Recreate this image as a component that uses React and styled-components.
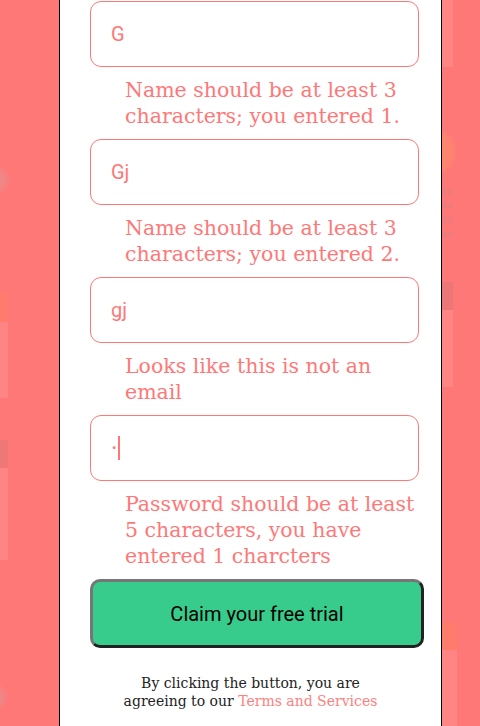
import React from "react";
import styled, { createGlobalStyle } from "styled-components";

const Global = createGlobalStyle`
  html, body {
    margin: 0;
    padding: 0;
    height: 726px;
    overflow: hidden;
    background: #ff7878;
  }
  * { box-sizing: border-box; }
`;

const Page = styled.div`
  position: relative;
  width: 480px;
  height: 726px;
  background: #ff7878;
  display: flex;
  justify-content: flex-start;
  padding-left: 59px;
  overflow: hidden;
`;

const Decor = styled.div`
  position: absolute;
  left: ${(p) => p.$x}px;
  top: ${(p) => p.$y}px;
  width: ${(p) => p.$w}px;
  height: ${(p) => p.$h}px;
  background: ${(p) => p.$c};
  border-radius: ${(p) => (p.$round ? "50%" : "0")};
  filter: ${(p) => (p.$round ? "blur(2px)" : "none")};
`;

const Panel = styled.main`
  position: relative;
  z-index: 1;
  width: 383px;
  height: 726px;
  background: #ffffff;
  border-left: 1px solid #000;
  border-right: 1px solid #000;
  padding: 1px 0 0 30px;
  display: flex;
  flex-direction: column;
  align-items: flex-start;
`;

const Form = styled.form`
  display: flex;
  flex-direction: column;
  align-items: flex-start;
  margin: 0;
`;

const Field = styled.div`
  width: 329px;
  height: 66px;
  border: 1px solid #ff7878;
  border-radius: 11px;
  padding: 0 20px;
  display: flex;
  align-items: center;
  font-family: Roboto, "Liberation Sans", sans-serif;
  font-size: 20px;
  color: #ff7878;
  background: #fff;
`;

const Value = styled.span`
  line-height: 24px;
`;

const Bullet = styled.span`
  font-size: 13px;
  line-height: 24px;
  margin-left: 1px;
`;

const Caret = styled.span`
  display: inline-block;
  width: 2px;
  height: 24px;
  margin-left: 2px;
  background: #ff7878;
`;

const Error = styled.p`
  margin: 10px 0 10px 35px;
  width: 300px;
  font-family: "DejaVu Serif", "Liberation Serif", serif;
  font-size: 20.5px;
  line-height: 26px;
  color: #ff7878;
`;

const Button = styled.button`
  margin-top: 0;
  width: 334px;
  height: 69px;
  border-radius: 10px;
  border: 3px solid;
  border-color: #767676 #222 #222 #767676;
  background: #38cc8c;
  color: #000;
  font-family: Roboto, "Liberation Sans", sans-serif;
  font-size: 20px;
  cursor: pointer;
`;

const Legal = styled.p`
  margin: 26px 0 0 -30px;
  width: 381px;
  text-align: center;
  font-family: "DejaVu Serif", "Liberation Serif", serif;
  font-size: 14px;
  line-height: 18px;
  color: #222;
`;

const Link = styled.a`
  color: #ff7f7f;
  text-decoration: none;
`;

const decor = [
  { x: 441, y: 0, w: 12, h: 67, c: "#ff8585" },
  { x: 421, y: 132, w: 34, h: 40, c: "#ff8470", round: true },
  { x: 441, y: 189, w: 12, h: 6, c: "#f27a7a" },
  { x: 441, y: 203, w: 12, h: 6, c: "#f27a7a" },
  { x: 441, y: 217, w: 12, h: 7, c: "#f27a7a" },
  { x: 441, y: 231, w: 12, h: 7, c: "#f27a7a" },
  { x: 441, y: 282, w: 12, h: 28, c: "#ec7777" },
  { x: 441, y: 310, w: 12, h: 77, c: "#ff8484" },
  { x: 441, y: 623, w: 16, h: 27, c: "#ff7b6c" },
  { x: 441, y: 650, w: 16, h: 80, c: "#ff8484" },
  { x: -16, y: 168, w: 24, h: 24, c: "#f08686", round: true },
  { x: 0, y: 293, w: 8, h: 29, c: "#ff7c6c" },
  { x: 0, y: 322, w: 8, h: 76, c: "#ff8484" },
  { x: 0, y: 440, w: 8, h: 28, c: "#ee7777" },
  { x: 0, y: 468, w: 8, h: 92, c: "#ff8484" },
  { x: -16, y: 686, w: 22, h: 22, c: "#f08686", round: true },
];

const fields = [
  { value: "G", error: "Name should be at least 3 characters; you entered 1." },
  { value: "Gj", error: "Name should be at least 3 characters; you entered 2." },
  { value: "gj", error: "Looks like this is not an email" },
  {
    value: "•",
    password: true,
    error: "Password should be at least 5 characters, you have entered 1 charcters",
  },
];

export default function App() {
  return (
    <>
      <Global />
      <Page>
        {decor.map((d, i) => (
          <Decor key={i} $x={d.x} $y={d.y} $w={d.w} $h={d.h} $c={d.c} $round={d.round} />
        ))}
        <Panel>
          <Form onSubmit={(e) => e.preventDefault()}>
            {fields.map((f, i) => (
              <React.Fragment key={i}>
                <Field>
                  {f.password ? (
                    <>
                      <Bullet>{f.value}</Bullet>
                      <Caret />
                    </>
                  ) : (
                    <Value>{f.value}</Value>
                  )}
                </Field>
                <Error>{f.error}</Error>
              </React.Fragment>
            ))}
            <Button type="submit">Claim your free trial</Button>
          </Form>
          <Legal>
            By clicking the button, you are
            <br />
            agreeing to our <Link href="#">Terms and Services</Link>
          </Legal>
        </Panel>
      </Page>
    </>
  );
}
